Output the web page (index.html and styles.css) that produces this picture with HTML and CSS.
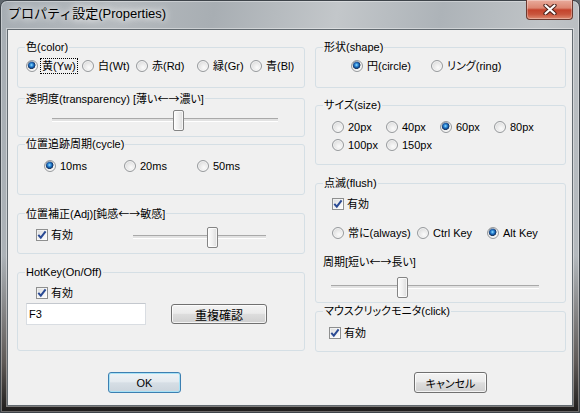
FILE: index.html
```html
<!DOCTYPE html>
<html lang="ja">
<head>
<meta charset="utf-8">
<title>プロパティ設定(Properties)</title>
<link rel="stylesheet" href="styles.css">
</head>
<body>
<div class="window">
  <div class="titlebar">
    <span class="title">プロパティ設定(Properties)</span>
    <span class="close"><svg width="14" height="11" viewBox="0 0 14 11"><path d="M2.5 1.5 L11.5 9.5 M11.5 1.5 L2.5 9.5" stroke="#4a2019" stroke-width="4.2" stroke-linecap="round"/><path d="M2.5 1.5 L11.5 9.5 M11.5 1.5 L2.5 9.5" stroke="#ffffff" stroke-width="2.2" stroke-linecap="round"/></svg></span>
  </div>
  <div class="client">
    <div class="columns">
      <div class="col col-left">
        <fieldset class="grp g-color">
          <legend>色(color)</legend>
          <div class="radios r-color">
            <span class="opt"><span class="radio on"></span><span class="focus">黄(Yw)</span></span>
            <span class="opt"><span class="radio"></span>白(Wt)</span>
            <span class="opt"><span class="radio"></span>赤(Rd)</span>
            <span class="opt"><span class="radio"></span>緑(Gr)</span>
            <span class="opt"><span class="radio"></span>青(Bl)</span>
          </div>
        </fieldset>
        <fieldset class="grp g-trans">
          <legend>透明度(transparency) [薄い<span class="arr">←→</span>濃い]</legend>
          <div class="slider s-trans"><span class="thumb" style="margin-left:121px"></span></div>
        </fieldset>
        <fieldset class="grp g-cycle">
          <legend>位置追跡周期(cycle)</legend>
          <div class="radios r-cycle">
            <span class="opt"><span class="radio on"></span>10ms</span>
            <span class="opt"><span class="radio"></span>20ms</span>
            <span class="opt"><span class="radio"></span>50ms</span>
          </div>
        </fieldset>
        <fieldset class="grp g-adj">
          <legend>位置補正(Adj)[鈍感<span class="arr">←→</span>敏感]</legend>
          <div class="adj-row">
            <span class="chk-opt adj-chk"><span class="check"><svg width="10" height="10" viewBox="0 0 10 10"><path d="M1.3 4.8 L3.8 7.6 L8.6 1.4" fill="none" stroke="#2a4a94" stroke-width="2"/></svg></span>有効</span>
            <div class="slider s-adj"><span class="thumb" style="margin-left:74px"></span></div>
          </div>
        </fieldset>
        <fieldset class="grp g-hotkey">
          <legend>HotKey(On/Off)</legend>
          <span class="chk-opt hk-chk"><span class="check"><svg width="10" height="10" viewBox="0 0 10 10"><path d="M1.3 4.8 L3.8 7.6 L8.6 1.4" fill="none" stroke="#2a4a94" stroke-width="2"/></svg></span>有効</span>
          <div class="hk-row">
            <div class="textbox">F3</div>
            <span class="btn b-dup">重複確認</span>
          </div>
        </fieldset>
      </div>
      <div class="col col-right">
        <fieldset class="grp g-shape">
          <legend>形状(shape)</legend>
          <div class="radios r-shape">
            <span class="opt"><span class="radio on"></span>円(circle)</span>
            <span class="opt"><span class="radio"></span>リング(ring)</span>
          </div>
        </fieldset>
        <fieldset class="grp g-size">
          <legend>サイズ(size)</legend>
          <div class="radios r-size">
            <span class="opt"><span class="radio"></span>20px</span>
            <span class="opt"><span class="radio"></span>40px</span>
            <span class="opt"><span class="radio on"></span>60px</span>
            <span class="opt"><span class="radio"></span>80px</span>
            <span class="opt"><span class="radio"></span>100px</span>
            <span class="opt"><span class="radio"></span>150px</span>
          </div>
        </fieldset>
        <fieldset class="grp g-flush">
          <legend>点滅(flush)</legend>
          <span class="chk-opt fl-chk"><span class="check"><svg width="10" height="10" viewBox="0 0 10 10"><path d="M1.3 4.8 L3.8 7.6 L8.6 1.4" fill="none" stroke="#2a4a94" stroke-width="2"/></svg></span>有効</span>
          <div class="radios r-flush">
            <span class="opt"><span class="radio"></span>常に(always)</span>
            <span class="opt"><span class="radio"></span>Ctrl Key</span>
            <span class="opt"><span class="radio on"></span>Alt Key</span>
          </div>
          <div class="sub-label">周期[短い<span class="arr">←→</span>長い]</div>
          <div class="slider s-flush"><span class="thumb" style="margin-left:66px"></span></div>
        </fieldset>
        <fieldset class="grp g-mouse">
          <legend>マウスクリックモニタ(click)</legend>
          <span class="chk-opt ms-chk"><span class="check"><svg width="10" height="10" viewBox="0 0 10 10"><path d="M1.3 4.8 L3.8 7.6 L8.6 1.4" fill="none" stroke="#2a4a94" stroke-width="2"/></svg></span>有効</span>
        </fieldset>
      </div>
    </div>
    <div class="buttons">
      <span class="btn b-ok">OK</span>
      <span class="btn b-cancel">キャンセル</span>
    </div>
  </div>
</div>
</body>
</html>
```

FILE: styles.css
```css
* { box-sizing: border-box; }
html, body { margin: 0; padding: 0; }
body {
  width: 580px;
  height: 413px;
  overflow: hidden;
  background: #5f666c;
  font-family: "Liberation Sans", "Noto Sans CJK JP", sans-serif;
  font-size: 11px;
  color: #000;
}

.window {
  width: 580px;
  height: 413px;
  display: flex;
  flex-direction: column;
  padding: 0 6px 6px;
  border: 1px solid #3e444a;
  border-radius: 7px 7px 0 0;
  background:
    linear-gradient(to bottom, rgba(0,0,0,0) 0, rgba(0,0,0,0) 62%, rgba(60,50,44,.7) 88%, rgba(22,20,19,.95) 100%),
    linear-gradient(100deg, #a6adb3 0%, #b5babe 18%, #a8aeb3 33%, #c3c7ca 52%, #adb3b8 68%, #c0c4c7 84%, #aeb4b9 100%);
  box-shadow: inset 0 0 0 1px rgba(255,255,255,.35);
}

.titlebar {
  height: 28px;
  flex: none;
  display: flex;
  justify-content: space-between;
  align-items: flex-start;
}
.title {
  margin-top: 5px;
  padding-left: 1px;
  font-size: 13px;
  line-height: 16px;
  color: #000;
  text-shadow: 0 0 6px #fff, 0 0 10px rgba(255,255,255,.9);
}
.close {
  width: 47px;
  height: 20px;
  margin-top: -1px;
  border: 1px solid #6b3a30;
  border-top: none;
  border-radius: 0 0 4px 4px;
  background: linear-gradient(#e9ab9c 0, #dc8671 42%, #c4432c 52%, #c8553d 75%, #de8a70 100%);
  box-shadow: inset 0 0 0 1px rgba(255,255,255,.3);
  display: flex;
  align-items: center;
  justify-content: center;
}

.client {
  flex: 1;
  background: #f0f0f0;
  border: 1px solid #626a70;
  box-shadow: 0 0 0 1px rgba(255,255,255,.4);
  padding: 10px 6px 0 9px;
  font-feature-settings: "palt";
}

.arr { font-family: "Noto Sans CJK JP", sans-serif; font-feature-settings: normal; }

.columns {
  display: flex;
  gap: 10px;
  align-items: flex-start;
}
.col { display: flex; flex-direction: column; }
.col-left { width: 288px; }
.col-right { width: 251px; }

.grp {
  margin: 0;
  padding: 0;
  min-width: 0;
  border: 1px solid #d5dfe5;
  border-radius: 3px;
}
.grp legend {
  margin-left: 7px;
  padding: 0 1px;
  height: 14px;
  line-height: 14px;
  font-size: 11px;
}

.g-color  { height: 48px; }
.g-trans  { height: 46px; margin-top: 3px; }
.g-cycle  { height: 58px; }
.g-adj    { height: 48px; margin-top: 11px; }
.g-hotkey { height: 86px; margin-top: 11px; padding-top: 8px; }
.g-shape  { height: 48px; }
.g-size   { height: 67px; margin-top: 10px; }
.g-flush  { height: 127px; margin-top: 11px; padding-top: 8px; }
.g-mouse  { height: 48px; margin-top: 1px; padding-top: 9px; }

.radios { display: grid; line-height: 14px; }
.opt { display: inline-flex; align-items: center; white-space: nowrap; }
.radio {
  flex: none;
  width: 12px;
  height: 12px;
  margin-right: 4px;
  border-radius: 50%;
  border: 1px solid #979a9d;
  background: radial-gradient(circle at 60% 65%, #fbfbfb 0, #e9e9e9 45%, #cfd0d1 100%);
  box-shadow: inset 0 0 0 1px rgba(255,255,255,.6);
}
.radio.on {
  background:
    radial-gradient(circle at 45% 40%, #9fe0ff 0, #3c9be0 1.3px, #1b63b4 2.4px, #123f78 3.3px, #2b3f5a 3.8px, rgba(0,0,0,0) 4.2px),
    radial-gradient(circle at 60% 65%, #fbfbfb 0, #e9e9e9 45%, #cfd0d1 100%);
}
.focus {
  outline: 1px dotted #000;
  padding: 0 1px;
  margin-left: -1px;
}

.r-color { grid-template-columns: 56px 54px 61px 53px auto; padding: 5px 0 0 8px; }
.r-cycle { grid-template-columns: 80px 73px auto; padding: 8px 0 0 26px; }
.r-shape { grid-template-columns: 80px auto; padding: 5px 0 0 35px; }
.r-size  { grid-template-columns: repeat(4, 54px); row-gap: 4px; padding: 8px 0 0 16px; }
.r-flush { grid-template-columns: 85px 70px auto; margin: 16px 0 0 16px; }

.chk-opt {
  display: flex;
  align-items: center;
  height: 12px;
  line-height: 12px;
  white-space: nowrap;
}
.check {
  flex: none;
  width: 12px;
  height: 12px;
  margin-right: 3px;
  border: 1px solid #8e8f8f;
  background: linear-gradient(135deg, #d9dadb 0, #f2f2f2 60%, #fdfdfd 100%);
  box-shadow: inset 0 0 0 1px rgba(255,255,255,.5);
  display: flex;
  align-items: center;
  justify-content: center;
}
.check svg { display: block; }

.slider {
  height: 21px;
  display: flex;
  align-items: flex-start;
  background: linear-gradient(to bottom, rgba(0,0,0,0) 8px, #a9a9a9 8px, #a9a9a9 9px, #e2e2e2 9px, #e2e2e2 11px, #ffffff 11px, #ffffff 12px, rgba(0,0,0,0) 12px);
}
.thumb {
  flex: none;
  width: 11px;
  height: 21px;
  border: 1px solid #848484;
  border-radius: 2px;
  background: linear-gradient(to right, #fdfdfd 0, #f0f0f0 50%, #dcdcdc 100%);
  box-shadow: inset 0 0 0 1px rgba(255,255,255,.7);
}
.s-trans { width: 226px; margin: 5px 0 0 34px; }
.adj-row { display: flex; align-items: flex-start; padding: 7px 0 0 18px; }
.adj-chk { width: 97px; margin-top: 2px; }
.s-adj { width: 133px; }
.hk-chk { margin-left: 18px; }
.hk-row { display: flex; align-items: flex-start; margin: 4px 0 0 8px; }
.textbox {
  width: 120px;
  height: 22px;
  padding-left: 2px;
  line-height: 20px;
  background: #fff;
  border: 1px solid #d9dde2;
  border-top-color: #c4c8ce;
}
.fl-chk { margin-left: 16px; }
.sub-label { margin: 14px 0 0 7px; line-height: 14px; }
.s-flush { width: 208px; margin: 8px 0 0 15px; }
.ms-chk { margin-left: 13px; }

.btn {
  display: flex;
  align-items: center;
  justify-content: center;
  border: 1px solid #707070;
  border-radius: 3px;
  background: linear-gradient(#f3f3f3 0, #ebebeb 46%, #dddddd 52%, #cfcfcf 100%);
  box-shadow: inset 0 0 0 1px rgba(255,255,255,.75);
  white-space: nowrap;
}
.b-dup { width: 96px; height: 20px; margin: 1px 0 0 25px; font-size: 12px; }
.buttons {
  display: flex;
  gap: 233px;
  margin-top: 20px;
  padding-left: 91px;
}
.b-ok, .b-cancel { width: 73px; height: 21px; }
.b-ok {
  border-color: #3c7fb1;
  background: linear-gradient(#eef3f6 0, #e4eaef 46%, #d6dee5 52%, #cbd4dc 100%);
  box-shadow: inset 0 0 0 1px #a8e2f6;
}
```
